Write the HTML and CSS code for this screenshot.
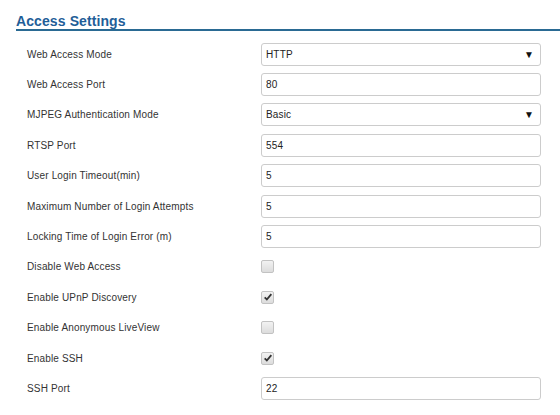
FILE: index.html
```html
<!DOCTYPE html>
<html>
<head>
<meta charset="utf-8">
<link rel="stylesheet" href="styles.css">
</head>
<body>
<div class="page">
  <h2 class="title">Access Settings</h2>
  <div class="form">
    <div class="row"><span class="label">Web Access Mode</span><div class="field select"><span>HTTP</span><span class="arrow">&#9660;</span></div></div>
    <div class="row"><span class="label">Web Access Port</span><div class="field"><span>80</span></div></div>
    <div class="row"><span class="label">MJPEG Authentication Mode</span><div class="field select"><span>Basic</span><span class="arrow">&#9660;</span></div></div>
    <div class="row"><span class="label">RTSP Port</span><div class="field"><span>554</span></div></div>
    <div class="row"><span class="label">User Login Timeout(min)</span><div class="field"><span>5</span></div></div>
    <div class="row"><span class="label">Maximum Number of Login Attempts</span><div class="field"><span>5</span></div></div>
    <div class="row"><span class="label">Locking Time of Login Error (m)</span><div class="field"><span>5</span></div></div>
    <div class="row"><span class="label">Disable Web Access</span><span class="check"></span></div>
    <div class="row"><span class="label">Enable UPnP Discovery</span><span class="check checked"><svg viewBox="0 0 12 12" width="10" height="10"><path d="M2 6.5 L4.6 9 L10 2.5" fill="none" stroke="#333" stroke-width="2.2"/></svg></span></div>
    <div class="row"><span class="label">Enable Anonymous LiveView</span><span class="check"></span></div>
    <div class="row"><span class="label">Enable SSH</span><span class="check checked"><svg viewBox="0 0 12 12" width="10" height="10"><path d="M2 6.5 L4.6 9 L10 2.5" fill="none" stroke="#333" stroke-width="2.2"/></svg></span></div>
    <div class="row"><span class="label">SSH Port</span><div class="field"><span>22</span></div></div>
  </div>
</div>
</body>
</html>
```
FILE: styles.css
```css
html, body {
  margin: 0;
  padding: 0;
  background: #fff;
}
.page {
  font-family: "Liberation Sans", Arial, sans-serif;
  color: #333;
  padding-left: 16px;
}
.title {
  margin: 0;
  padding-top: 13px;
  font-size: 14px;
  line-height: 16px;
  font-weight: bold;
  color: #1f5e98;
  letter-spacing: 0.1px;
  border-bottom: 2px solid #2a6a93;
  padding-bottom: 0;
}
.form {
  padding-left: 11px;
  padding-top: 8px;
}
.row {
  display: grid;
  grid-template-columns: 234px 280px;
  align-items: center;
  height: 30.4px;
  font-size: 10px;
  letter-spacing: 0.15px;
}
.label {
  color: #333;
}
.field {
  box-sizing: border-box;
  height: 23px;
  border: 1px solid #ccc;
  border-radius: 3px;
  display: flex;
  align-items: center;
  justify-content: space-between;
  padding: 0 6px 0 4px;
  color: #222;
  background: #fff;
}
.arrow {
  font-size: 10px;
  color: #111;
}
.check {
  box-sizing: border-box;
  width: 13px;
  height: 13px;
  border: 1px solid #c2c2c2;
  border-radius: 2px;
  background: linear-gradient(#f2f2f2, #dcdcdc);
  display: flex;
  align-items: center;
  justify-content: center;
}
```
